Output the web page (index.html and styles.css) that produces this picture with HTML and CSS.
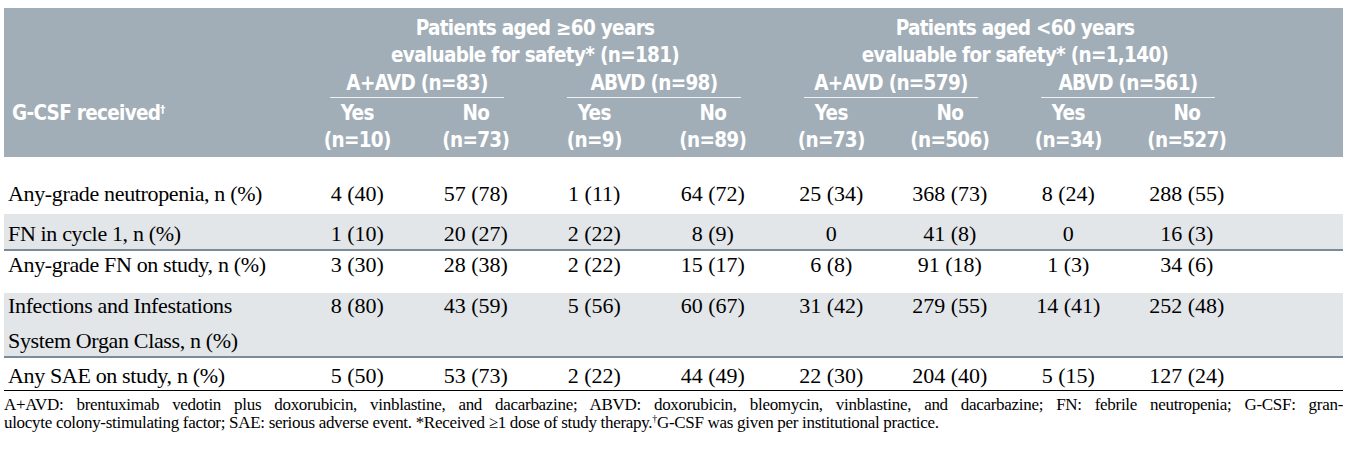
FILE: index.html
```html
<!DOCTYPE html>
<html lang="en">
<head>
<meta charset="utf-8">
<title>G-CSF table</title>
<link rel="stylesheet" href="styles.css">
</head>
<body>
<table class="tbl">
  <colgroup>
    <col class="c-lbl">
    <col class="c-num"><col class="c-num"><col class="c-num"><col class="c-num">
    <col class="c-num"><col class="c-num"><col class="c-num"><col class="c-num">
    <col class="c-end">
  </colgroup>
  <thead>
    <tr class="hA">
      <th class="hl"></th>
      <th colspan="4">Patients aged ≥60 years<br>evaluable for safety* (n=181)</th>
      <th colspan="4" class="shift">Patients aged &lt;60 years<br>evaluable for safety* (n=1,140)</th>
      <th></th>
    </tr>
    <tr class="hB">
      <th class="hl"></th>
      <th colspan="2"><div class="grp">A+AVD (n=83)</div></th>
      <th colspan="2"><div class="grp">ABVD (n=98)</div></th>
      <th colspan="2"><div class="grp">A+AVD (n=579)</div></th>
      <th colspan="2"><div class="grp">ABVD (n=561)</div></th>
      <th></th>
    </tr>
    <tr class="hC">
      <th class="hl">G-CSF received<sup>†</sup></th>
      <th>Yes<br>(n=10)</th>
      <th>No<br>(n=73)</th>
      <th>Yes<br>(n=9)</th>
      <th>No<br>(n=89)</th>
      <th>Yes<br>(n=73)</th>
      <th>No<br>(n=506)</th>
      <th>Yes<br>(n=34)</th>
      <th>No<br>(n=527)</th>
      <th></th>
    </tr>
  </thead>
  <tbody>
    <tr class="r1">
      <td class="lbl">Any-grade neutropenia, n (%)</td>
      <td>4 (40)</td><td>57 (78)</td><td>1 (11)</td><td>64 (72)</td>
      <td>25 (34)</td><td>368 (73)</td><td>8 (24)</td><td>288 (55)</td><td></td>
    </tr>
    <tr class="r2 shade sep">
      <td class="lbl">FN in cycle 1, n (%)</td>
      <td>1 (10)</td><td>20 (27)</td><td>2 (22)</td><td>8 (9)</td>
      <td>0</td><td>41 (8)</td><td>0</td><td>16 (3)</td><td></td>
    </tr>
    <tr class="r3">
      <td class="lbl">Any-grade FN on study, n (%)</td>
      <td>3 (30)</td><td>28 (38)</td><td>2 (22)</td><td>15 (17)</td>
      <td>6 (8)</td><td>91 (18)</td><td>1 (3)</td><td>34 (6)</td><td></td>
    </tr>
    <tr class="r4 shade sep">
      <td class="lbl"><div>Infections and Infestations</div><div class="l2">System Organ Class, n (%)</div></td>
      <td>8 (80)</td><td>43 (59)</td><td>5 (56)</td><td>60 (67)</td>
      <td>31 (42)</td><td>279 (55)</td><td>14 (41)</td><td>252 (48)</td><td></td>
    </tr>
    <tr class="r5">
      <td class="lbl">Any SAE on study, n (%)</td>
      <td>5 (50)</td><td>53 (73)</td><td>2 (22)</td><td>44 (49)</td>
      <td>22 (30)</td><td>204 (40)</td><td>5 (15)</td><td>127 (24)</td><td></td>
    </tr>
  </tbody>
</table>
<div class="notes">
  <div class="n1">A+AVD: brentuximab vedotin plus doxorubicin, vinblastine, and dacarbazine; ABVD: doxorubicin, bleomycin, vinblastine, and dacarbazine; FN: febrile neutropenia; G-CSF: gran-</div>
  <div class="n2">ulocyte colony-stimulating factor; SAE: serious adverse event. *Received ≥1 dose of study therapy.<sup>†</sup>G-CSF was given per institutional practice.</div>
</div>
</body>
</html>
```
FILE: styles.css
```css
body {
  margin: 8px 4px;
  background: #ffffff;
  color: #000000;
  font-family: "Liberation Serif", "Times New Roman", serif;
}

.tbl {
  width: 1339px;
  table-layout: fixed;
  border-collapse: separate;
  border-spacing: 0;
}

.c-lbl { width: 294px; }
.c-num { width: 118.5px; }

.tbl th,
.tbl td {
  padding: 0;
  vertical-align: top;
}

/* header */
.tbl thead th {
  background: #a2aeb7;
  color: #ffffff;
  font-family: "DejaVu Sans Condensed", "Liberation Sans Narrow", "Liberation Sans", sans-serif;
  font-weight: bold;
  font-size: 20.5px;
  letter-spacing: -0.7px;
  line-height: 27px;
  text-align: center;
  white-space: nowrap;
}

.tbl thead th.hl {
  text-align: left;
  padding-left: 8px;
}

.tbl thead th sup {
  font-size: 11px;
  line-height: 0;
  vertical-align: 7px;
}

.hA th { padding-top: 7px; }
.hA th.shift { padding-left: 12px; }
.hB th { padding-top: 1px; }
.hC th { padding-top: 2px; padding-bottom: 3px; }

.grp {
  margin: 0 31px 0 32px;
  border-bottom: 1px solid #eef1f3;
}

/* body */
.tbl tbody td {
  font-size: 22px;
  line-height: 22px;
  text-align: center;
  white-space: nowrap;
}

.tbl tbody td.lbl {
  text-align: left;
  padding-left: 4px;
  letter-spacing: -0.35px;
}

.shade td { background: #e2e6e9; }
.sep td { border-bottom: 2px solid #7b8b98; }

.r1 { height: 57px; }
.r1 td { padding-top: 26px; }

.r2 { height: 37px; }
.r2 td { padding-top: 9px; }

.r3 { height: 42px; }
.r3 td { padding-top: 3px; }

.r4 { height: 65px; }
.r4 td { padding-top: 2px; }
.r4 .l2 { margin-top: 13px; }

.r5 { height: 33px; }
.r5 td {
  padding-top: 7px;
  border-bottom: 1px solid #000000;
}

/* footnote */
.notes {
  width: 1339px;
  margin-top: 5px;
  font-size: 17px;
  letter-spacing: -0.3px;
  line-height: 18px;
}

.n1 {
  text-align: justify;
  text-align-last: justify;
}

.notes sup {
  font-size: 10px;
  line-height: 0;
  vertical-align: 6px;
}
```
